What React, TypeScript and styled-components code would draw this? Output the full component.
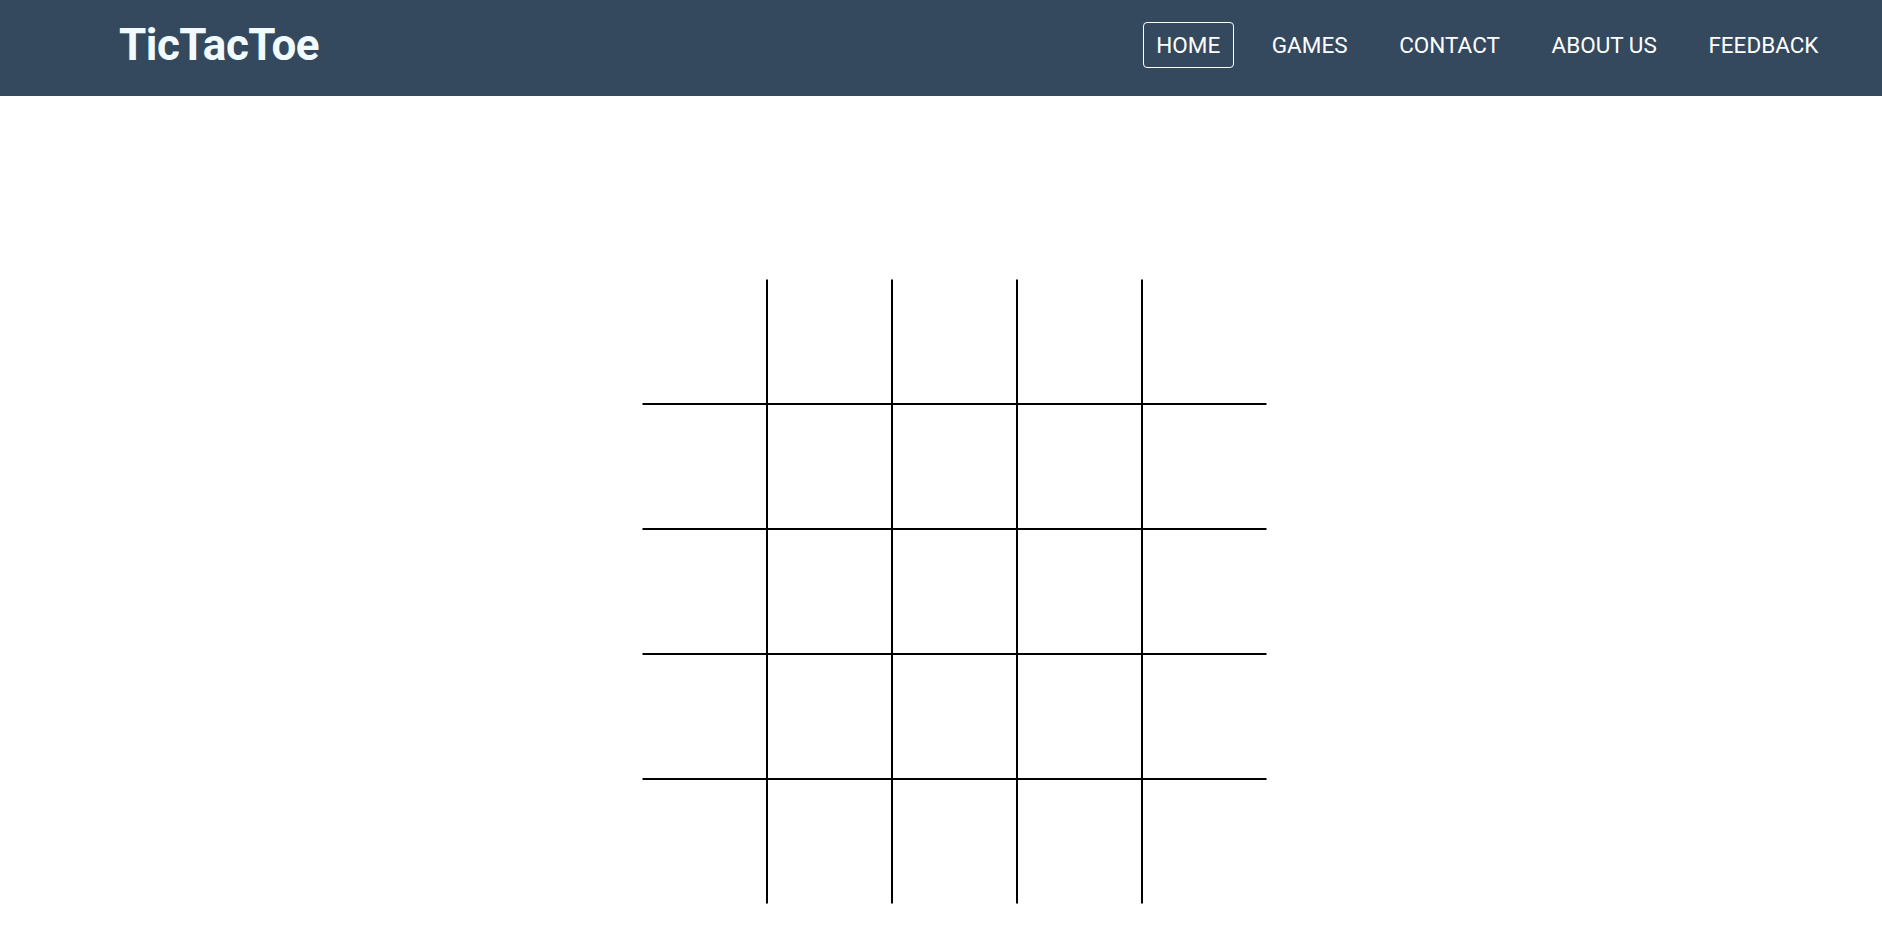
import React from "react";
import styled, { createGlobalStyle } from "styled-components";

const COLOURS = {
  HEADER: "#34495e",
  LOGO: "#f0faff",
  WHITE: "#ffffff",
  LINE: "#000000",
};

const GlobalStyle = createGlobalStyle`
  body {
    margin: 0;
    font-family: Roboto, "Liberation Sans", sans-serif;
    background: ${COLOURS.WHITE};
  }
`;

const Header = styled.header`
  height: 96px;
  background: ${COLOURS.HEADER};
  display: flex;
  align-items: center;
  justify-content: space-between;
  padding: 0 50px 6px 119px;
  box-sizing: border-box;
`;

const Logo = styled.h1`
  margin: 0;
  font-size: 44px;
  font-weight: 700;
  letter-spacing: -0.5px;
  color: ${COLOURS.LOGO};
`;

const Nav = styled.nav`
  display: flex;
  align-items: center;
  gap: 24.6px;
`;

const NavLink = styled.a<{ active?: boolean }>`
  display: block;
  padding: 10px 12.5px;
  font-size: 22.5px;
  line-height: 24px;
  color: ${COLOURS.WHITE};
  text-decoration: none;
  border: 1px solid ${(p) => (p.active ? COLOURS.WHITE : "transparent")};
  border-radius: 4px;
`;

const Main = styled.main`
  display: flex;
  justify-content: center;
  padding: 183px 0 48px 27px;
`;

const Board = styled.div`
  display: grid;
  grid-template-columns: repeat(5, 125px);
  grid-template-rows: repeat(5, 125px);
`;

const Cell = styled.div<{ row: number; col: number }>`
  box-sizing: border-box;
  border: 1px solid ${COLOURS.LINE};
  border-top-color: ${(p) => (p.row === 0 ? "transparent" : COLOURS.LINE)};
  border-bottom-color: ${(p) => (p.row === 4 ? "transparent" : COLOURS.LINE)};
  border-left-color: ${(p) => (p.col === 0 ? "transparent" : COLOURS.LINE)};
  border-right-color: ${(p) => (p.col === 4 ? "transparent" : COLOURS.LINE)};
`;

const links = ["HOME", "GAMES", "CONTACT", "ABOUT US", "FEEDBACK"];

const App: React.FC = () => {
  return (
    <>
      <GlobalStyle />
      <Header>
        <Logo>TicTacToe</Logo>
        <Nav>
          {links.map((l, i) => (
            <NavLink key={l} href="#" active={i === 0}>
              {l}
            </NavLink>
          ))}
        </Nav>
      </Header>
      <Main>
        <Board>
          {Array.from({ length: 25 }).map((_, i) => (
            <Cell key={i} row={Math.floor(i / 5)} col={i % 5} />
          ))}
        </Board>
      </Main>
    </>
  );
};

export default App;
